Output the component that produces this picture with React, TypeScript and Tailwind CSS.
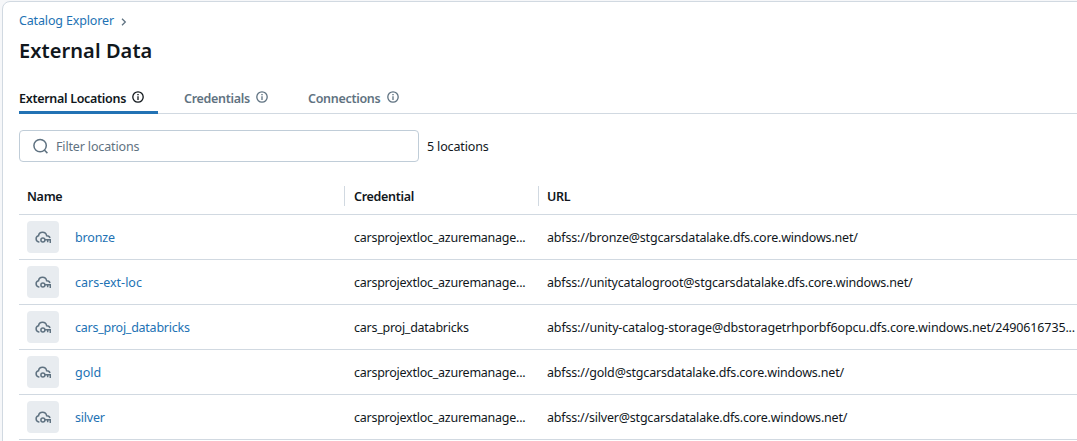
import React from "react";

const InfoIcon = () => (
  <svg width="12" height="12" viewBox="0 0 12 12" fill="none" stroke="currentColor" className="mb-[4px] block shrink-0">
    <circle cx="6" cy="6" r="5.2" strokeWidth="1.3" />
    <path d="M6 5.3V9" strokeWidth="1.3" />
    <path d="M6 3v1.3" strokeWidth="1.4" />
  </svg>
);

const CloudKeyIcon = () => (
  <svg width="16" height="16" viewBox="0 0 16 16" fill="none" stroke="currentColor" strokeWidth="1.5" className="block">
    <path d="M4.4 12.9H3.9A3.1 3.1 0 0 1 3.5 6.8A4.1 4.1 0 0 1 11.6 6.7A3.3 3.3 0 0 1 15 9" />
    <circle cx="7.9" cy="11" r="2" />
    <path d="M9.9 10.7H15.3V14M12.7 10.7V13.2" />
  </svg>
);

const SearchIcon = () => (
  <svg width="16" height="16" viewBox="0 0 16 16" fill="none" stroke="currentColor" strokeWidth="1.5" className="block shrink-0">
    <circle cx="7.1" cy="7.6" r="6.2" />
    <path d="M11.3 12L14.4 15.1" />
  </svg>
);

const tabs = [
  { label: "External Locations", width: "w-[139px] mr-[26px]", active: true },
  { label: "Credentials", width: "w-[84px] mr-[40px]", active: false },
  { label: "Connections", width: "w-[91px]", active: false },
];

const azure = "carsprojextloc_azuremanage...";
const rows = [
  { name: "bronze", nameTracking: "tracking-[-0.15px]", credential: azure, url: "abfss://bronze@stgcarsdatalake.dfs.core.windows.net/", tracking: "tracking-[-0.19px]" },
  { name: "cars-ext-loc", nameTracking: "tracking-[0px]", credential: azure, url: "abfss://unitycatalogroot@stgcarsdatalake.dfs.core.windows.net/", tracking: "tracking-[-0.185px]" },
  { name: "cars_proj_databricks", nameTracking: "tracking-[-0.25px]", credential: "cars_proj_databricks", url: "abfss://unity-catalog-storage@dbstoragetrhporbf6opcu.dfs.core.windows.net/2490616735...", tracking: "tracking-[-0.14px]" },
  { name: "gold", nameTracking: "tracking-[0px]", credential: azure, url: "abfss://gold@stgcarsdatalake.dfs.core.windows.net/", tracking: "tracking-[-0.18px]" },
  { name: "silver", nameTracking: "tracking-[-0.2px]", credential: azure, url: "abfss://silver@stgcarsdatalake.dfs.core.windows.net/", tracking: "tracking-[-0.205px]" },
];

export default function App() {
  return (
    <div className="h-[441px] w-[1077px] overflow-hidden bg-[#f6f7f9] pl-[2px] pt-[1px] font-['Noto_Sans',sans-serif] text-[12.5px] leading-5 tracking-[-0.25px] text-[#11171c]">
      <main className="h-[460px] w-[1090px] rounded-tl-[8px] border border-[#d1d9e1] bg-white pl-4 pt-[9px]">
        <nav className="flex h-5 items-center text-[#2272b4]">
          <a className="tracking-[-0.15px]">Catalog Explorer</a>
          <svg width="6" height="8" viewBox="0 0 6 8" fill="none" stroke="#5f7281" strokeWidth="1.3" className="ml-[7px] mt-[2px]">
            <path d="M1 .8L4.3 4L1 7.2" />
          </svg>
        </nav>
        <h1 className="mt-[6px] h-7 text-[20px] font-semibold leading-7 tracking-[0.08px]">External Data</h1>
        <div className="mt-[17px] flex h-[32px] border-b border-[#d1d9e1] font-semibold tracking-[-0.3px]">
          {tabs.map((t) => (
            <div
              key={t.label}
              className={`flex h-[32px] items-center justify-between whitespace-nowrap ${t.width} ${
                t.active ? "border-b-[3px] border-[#2272b4] pr-[14px] pt-[4px]" : "pt-[1px] text-[#5f7281]"
              }`}
            >
              <span>{t.label}</span>
              <InfoIcon />
            </div>
          ))}
        </div>
        <div className="mt-4 flex h-8 items-center">
          <div className="flex h-8 w-[400px] items-center gap-[7px] rounded-[4px] border border-[#c0cdd8] pl-[13px] text-[#5f7281]">
            <SearchIcon />
            <span className="pt-[2px] tracking-[-0.15px]">Filter locations</span>
          </div>
          <span className="ml-2 pt-[2px] tracking-[-0.15px]">5 locations</span>
        </div>
        <div className="mt-4 flex h-[37px] items-center border-b border-[#d1d9e1] font-semibold tracking-[-0.3px]">
          <div className="w-[325px] pl-2 pt-[2px]">Name</div>
          <div className="flex h-5 w-[194px] items-center border-l border-[#d1d9e1] pl-[9px] pt-[2px]">Credential</div>
          <div className="flex h-5 items-center border-l border-[#d1d9e1] pl-2 pt-[2px]">URL</div>
        </div>
        {rows.map((r) => (
          <div key={r.name} className="flex h-[45px] items-center whitespace-nowrap border-b border-[#d1d9e1]">
            <div className="flex w-[335px] items-center pl-2">
              <div className="flex size-8 items-center justify-center rounded-[4px] bg-[#e8ecf0] text-[#5f7281]">
                <CloudKeyIcon />
              </div>
              <a className={`ml-4 pt-[2px] text-[#2272b4] ${r.nameTracking}`}>{r.name}</a>
            </div>
            <div className="w-[193px] pt-[2px]">{r.credential}</div>
            <div className={`pt-[2px] ${r.tracking}`}>{r.url}</div>
          </div>
        ))}
      </main>
    </div>
  );
}
